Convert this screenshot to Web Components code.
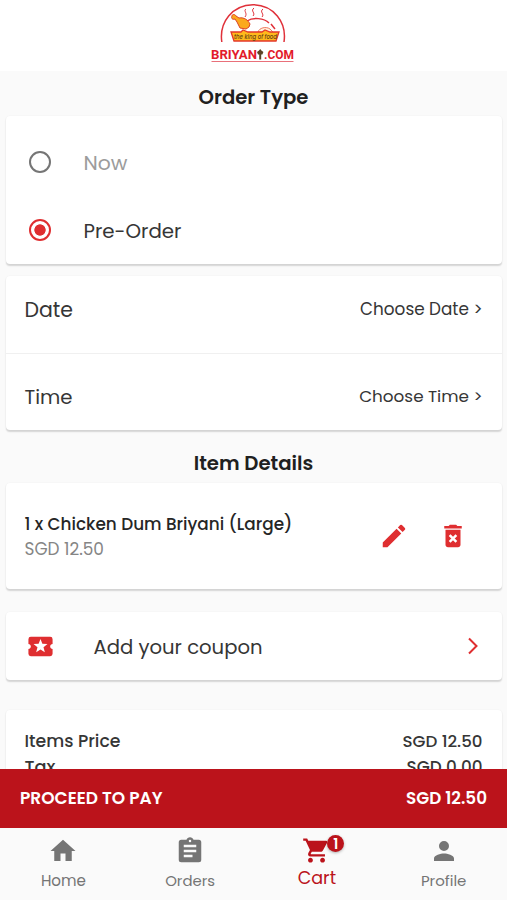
<!DOCTYPE html>
<html lang="en">
<head>
  <meta charset="UTF-8">
  <meta name="viewport" content="width=device-width, initial-scale=1.0">
  <title>Briyani.com - Cart</title>
  <style>
    body {
      margin: 0;
      font-family: Poppins, Inter, "Liberation Sans", sans-serif;
      color: #363636;
    }
  </style>
</head>
<body>

<cart-page></cart-page>

<script>
  // Base class: clones a string template into an open shadow root
  class BaseElement extends HTMLElement {
    constructor() {
      super();
      const template = document.createElement('template');
      template.innerHTML = this.template();
      this.attachShadow({ mode: 'open' });
      this.shadowRoot.appendChild(template.content.cloneNode(true));
    }

    template() {
      return '<slot></slot>';
    }
  }

  // Text scaled to a given width: <ui-text width="96">Pre-Order</ui-text>
  class UiText extends BaseElement {
    template() {
      return `
        <style>
          :host { display: block; font-size: 20px; line-height: 24px; white-space: nowrap; }
          span { display: inline-block; }
        </style>
        <span><slot></slot></span>`;
    }

    connectedCallback() {
      const width = Number(this.getAttribute('width'));
      const span = this.shadowRoot.querySelector('span');
      const size = parseFloat(getComputedStyle(span).fontSize);
      span.style.fontSize = (size * width / span.getBoundingClientRect().width).toFixed(2) + 'px';
    }
  }

  const ICONS = {
    home: '<path d="M10 20v-6h4v6h5v-8h3L12 3 2 12h3v8z"/>',
    orders: '<path d="M19 3h-4.180C14.400 1.840 13.300 1 12 1s-2.400.840-2.820 2H5a2 2 0 0 0-2 2v14a2 2 0 0 0 2 2h14a2 2 0 0 0 2-2V5a2 2 0 0 0-2-2zm-7 0a1 1 0 1 1 0 2 1 1 0 0 1 0-2zm2 14H7v-2h7v2zm3-4H7v-2h10v2zm0-4H7V7h10v2z"/>',
    cart: '<path d="M7 18c-1.100 0-1.990.900-1.990 2S5.900 22 7 22s2-.900 2-2-.900-2-2-2zM1 2v2h2l3.600 7.590-1.350 2.450C4.520 15.370 5.480 17 7 17h12v-2H7.420c-.140 0-.250-.110-.250-.250l.030-.120.900-1.630h7.450c.750 0 1.410-.410 1.750-1.030l3.580-6.490A1 1 0 0 0 20 4H5.210l-.940-2H1zm16 16c-1.100 0-1.990.900-1.990 2s.890 2 1.990 2 2-.900 2-2-.900-2-2-2z"/>',
    profile: '<path d="M12 12a4 4 0 1 0 0-8 4 4 0 0 0 0 8zm0 2c-2.670 0-8 1.340-8 4v2h16v-2c0-2.660-5.330-4-8-4z"/>',
    edit: '<path d="M3 17.250V21h3.750L17.810 9.940l-3.750-3.750L3 17.250zM20.710 7.040a1 1 0 0 0 0-1.410l-2.340-2.340a1 1 0 0 0-1.410 0l-1.830 1.830 3.750 3.750 1.830-1.830z"/>',
    trash: '<path d="M6 19c0 1.100.900 2 2 2h8c1.100 0 2-.900 2-2V7H6v12zM19 4h-3.500l-1-1h-5l-1 1H5v2h14V4z"/><path d="M9.300 11.300l5.400 5.400M14.700 11.300l-5.400 5.400" stroke="#fff" stroke-width="2"/>',
    coupon: '<path d="M20 12c0-1.100.900-2 2-2V6a2 2 0 0 0-2-2H4a2 2 0 0 0-1.990 2v4c1.100 0 1.990.900 1.990 2s-.890 2-2 2v4a2 2 0 0 0 2 2h16a2 2 0 0 0 2-2v-4c-1.100 0-2-.900-2-2zm-4.420 4.800L12 14.500l-3.580 2.300 1.080-4.120-3.290-2.690 4.240-.250L12 5.800l1.540 3.950 4.240.250-3.290 2.690 1.090 4.110z"/>',
    chevron: '<path d="M8 4.500l7.500 7.500L8 19.500" fill="none" stroke="currentColor" stroke-width="2"/>'
  };

  // <ui-icon name="home" size="24">
  class UiIcon extends BaseElement {
    template() {
      const size = this.getAttribute('size') || 25;
      return `
        <style>
          :host { display: block; flex: none; }
          svg { display: block; fill: currentColor; }
        </style>
        <svg width="${size}" height="${size}" viewBox="0 0 24 24">${ICONS[this.getAttribute('name')]}</svg>`;
    }
  }

  class BrandLogo extends BaseElement {
    template() {
      return `
        <style>
          :host { display: block; }
          svg { display: block; }
        </style>
        <svg width="108" height="70" viewBox="0 0 108 70">
          <g fill="none" stroke="#e0313a" stroke-width="1.500">
            <path d="M21.800 42C19 22 32.500 5 53 4.700C73.500 5 87 22 84 42"/>
            <path d="M46 9c-3 2 2 4-1 8M54 8c-4 3 2 5-1 8M63 9c-4 3 2 5-1 8" stroke-width="1"/>
            <path d="M47 21c6-4 17-3 22 2M71 24l4 5" stroke-width="1.500"/>
          </g>
          <path d="M58 32c1-4 8-6 12-3l4 4z" fill="#fff4df" stroke="#e85638" stroke-width=".8"/>
          <path d="M32 16c0-2 3-2 4 0l3 2c5-1 9 2 11 6l-1 3-3 2-6-1-3-6-2-3c-3 1-4-1-3-3z" fill="#fba91d" stroke="#db4327" stroke-width="1"/>
          <path d="M31 32h10l2-2 5 2h14l3-2 5 2h9l-3 9H34z" fill="#ffb91b" stroke="#e4382b" stroke-width="1.300"/>
          <text x="34" y="38.800" font-size="6.600" font-style="italic" font-weight="500" fill="#684313" textLength="43" lengthAdjust="spacingAndGlyphs">the king of food</text>
          <g fill="#e21b2b" font-family="Roboto, sans-serif" font-size="12.800" font-weight="700">
            <text x="11" y="58.800" textLength="46" lengthAdjust="spacingAndGlyphs">BRIYAN</text>
            <text x="64" y="58.800" textLength="30" lengthAdjust="spacingAndGlyphs">.COM</text>
          </g>
          <path d="M60.200 49l1.200 1.500 2 1.500-1 2.500h-1.200v5h-2v-5h-1.200l-1-2.500 2-1.500z" fill="#5c4324"/>
          <path d="M11.500 61.500h82" stroke="#e9707a" stroke-width="1"/>
        </svg>`;
    }
  }

  class UiCard extends BaseElement {
    template() {
      return `
        <style>
          :host {
            display: flex;
            flex-direction: column;
            flex: none;
            box-sizing: border-box;
            margin: 0 5px 0 6px;
            background: #fff;
            border-radius: 4px;
            box-shadow: 0 1.500px 1.500px rgba(0, 0, 0, .15), 0 0 2px rgba(0, 0, 0, .04);
          }
        </style>
        <slot></slot>`;
    }
  }

  // A row with its content pushed to both ends
  class UiRow extends BaseElement {
    template() {
      return `
        <style>
          :host {
            display: flex;
            align-items: center;
            justify-content: space-between;
            box-sizing: border-box;
            padding: 0 19.500px 0 18.500px;
          }
        </style>
        <slot></slot>`;
    }
  }

  class RadioOption extends BaseElement {
    template() {
      return `
        <style>
          :host { display: flex; align-items: center; gap: 32.500px; height: 68px; padding-left: 23px; color: #9c9c9c; }
          :host([checked]) { color: #363636; }
          i {
            box-sizing: border-box;
            width: 22px;
            height: 22px;
            border: 2.500px solid #757575;
            border-radius: 50%;
          }
          :host([checked]) i {
            border-color: #df2e30;
            background: radial-gradient(circle, #df2e30 5.300px, transparent 6px);
          }
        </style>
        <i></i><slot></slot>`;
    }
  }

  class NavItem extends BaseElement {
    template() {
      const badge = this.getAttribute('badge');
      return `
        <style>
          :host { display: flex; flex-direction: column; align-items: center; flex: 1; padding-top: 8px; gap: 3px; color: #757575; }
          :host([active]) { color: #bb131b; gap: 1px; }
          div { position: relative; }
          b {
            position: absolute;
            left: 25px;
            top: -1px;
            width: 17px;
            height: 17px;
            border-radius: 50%;
            background: #bb131b;
            box-shadow: 0 1px 3px rgba(0, 0, 0, .3);
            color: #fff;
            font-size: 14px;
            font-weight: 600;
            line-height: 18px;
            text-align: center;
          }
        </style>
        <div>
          <ui-icon name="${this.getAttribute('icon')}" size="${this.getAttribute('size') || 30}"></ui-icon>
          ${badge ? `<b>${badge}</b>` : ''}
        </div>
        <slot></slot>`;
    }
  }

  class CartPage extends BaseElement {
    template() {
      return `
        <style>
          :host { display: flex; flex-direction: column; height: 900px; overflow: hidden; background: #fafafa; }
          header { display: flex; justify-content: center; flex: none; height: 71px; background: #fff; }
          main { display: flex; flex-direction: column; flex: 1; min-height: 0; overflow: hidden; }
          h2 { display: flex; justify-content: center; align-items: center; flex: none; height: 45px; padding-top: 6px; margin: 0; box-sizing: border-box; color: #202020; font-weight: 600; }
          h2.details { height: 53px; padding-top: 12px; }
          .type { height: 148px; padding-top: 12px; }
          .type ui-text { padding-top: 2px; }
          .when { height: 154px; margin-top: 12px; }
          .when ui-row { height: 77px; padding-bottom: 10px; }
          .when ui-row + ui-row { padding-top: 10px; padding-bottom: 0; border-top: 1px solid #f0f0f0; }
          .when .small { padding-bottom: 2px; }
          .items { flex-direction: row; align-items: center; height: 106px; padding: 0 34px 0 18.500px; }
          .items div { flex: 1; padding-top: 3px; }
          .items .name { color: #262626; font-weight: 500; }
          .items .price { color: #858585; font-size: 16px; line-height: 27px; }
          .items ui-icon { color: #df2e30; }
          .items ui-icon + ui-icon { margin-left: 29px; }
          .coupon { flex-direction: row; align-items: center; height: 68px; margin-top: 23px; padding: 0 17px 0 19.500px; }
          .coupon ui-icon { color: #df2e30; }
          .coupon ui-text { flex: 1; margin-left: 39px; padding-top: 1px; }
          .totals { height: 160px; margin-top: 30px; padding-top: 19px; gap: 2px; font-weight: 500; }
          .small { font-size: 17px; }
          footer { flex: none; }
          .pay { height: 59px; padding: 0 20px 1px 20px; background: #bb131b; color: #fff; font-weight: 600; }
          nav { display: flex; height: 72px; }
          nav ui-text { font-size: 15px; }
          nav [active] ui-text { font-size: 18px; }
        </style>

        <header><brand-logo></brand-logo></header>

        <main>
          <h2><ui-text width="110">Order Type</ui-text></h2>
          <ui-card class="type">
            <radio-option><ui-text width="44">Now</ui-text></radio-option>
            <radio-option checked><ui-text width="98">Pre-Order</ui-text></radio-option>
          </ui-card>

          <ui-card class="when">
            <ui-row>
              <ui-text width="48.500">Date</ui-text>
              <ui-text class="small" width="122.500">Choose Date &gt;</ui-text>
            </ui-row>
            <ui-row>
              <ui-text width="48">Time</ui-text>
              <ui-text class="small" width="123.500">Choose Time &gt;</ui-text>
            </ui-row>
          </ui-card>

          <h2 class="details"><ui-text width="119.500">Item Details</ui-text></h2>
          <ui-card class="items">
            <div>
              <ui-text class="name small" width="268">1 x Chicken Dum Briyani (Large)</ui-text>
              <ui-text class="price" width="79.500">SGD 12.50</ui-text>
            </div>
            <ui-icon name="edit" size="30"></ui-icon>
            <ui-icon name="trash" size="30"></ui-icon>
          </ui-card>

          <ui-card class="coupon">
            <ui-icon name="coupon" size="29"></ui-icon>
            <ui-text width="169">Add your coupon</ui-text>
            <ui-icon name="chevron" size="24"></ui-icon>
          </ui-card>

          <ui-card class="totals">
            <ui-row>
              <ui-text class="small" width="96">Items Price</ui-text>
              <ui-text class="small" width="80">SGD 12.50</ui-text>
            </ui-row>
            <ui-row>
              <ui-text class="small" width="31">Tax</ui-text>
              <ui-text class="small" width="76">SGD 0.00</ui-text>
            </ui-row>
          </ui-card>
        </main>

        <footer>
          <ui-row class="pay">
            <ui-text class="small" width="142.500">PROCEED TO PAY</ui-text>
            <ui-text class="small" width="81">SGD 12.50</ui-text>
          </ui-row>
          <nav>
            <nav-item icon="home"><ui-text width="45">Home</ui-text></nav-item>
            <nav-item icon="orders"><ui-text width="50">Orders</ui-text></nav-item>
            <nav-item icon="cart" size="29" badge="1" active><ui-text width="38.500">Cart</ui-text></nav-item>
            <nav-item icon="profile"><ui-text width="45.500">Profile</ui-text></nav-item>
          </nav>
        </footer>`;
    }
  }

  customElements.define('ui-icon', UiIcon);
  customElements.define('brand-logo', BrandLogo);
  customElements.define('ui-card', UiCard);
  customElements.define('ui-row', UiRow);
  customElements.define('radio-option', RadioOption);
  customElements.define('nav-item', NavItem);
  customElements.define('cart-page', CartPage);
  // Last, so that every text is measured inside its finished layout
  customElements.define('ui-text', UiText);
</script>

</body>
</html>
